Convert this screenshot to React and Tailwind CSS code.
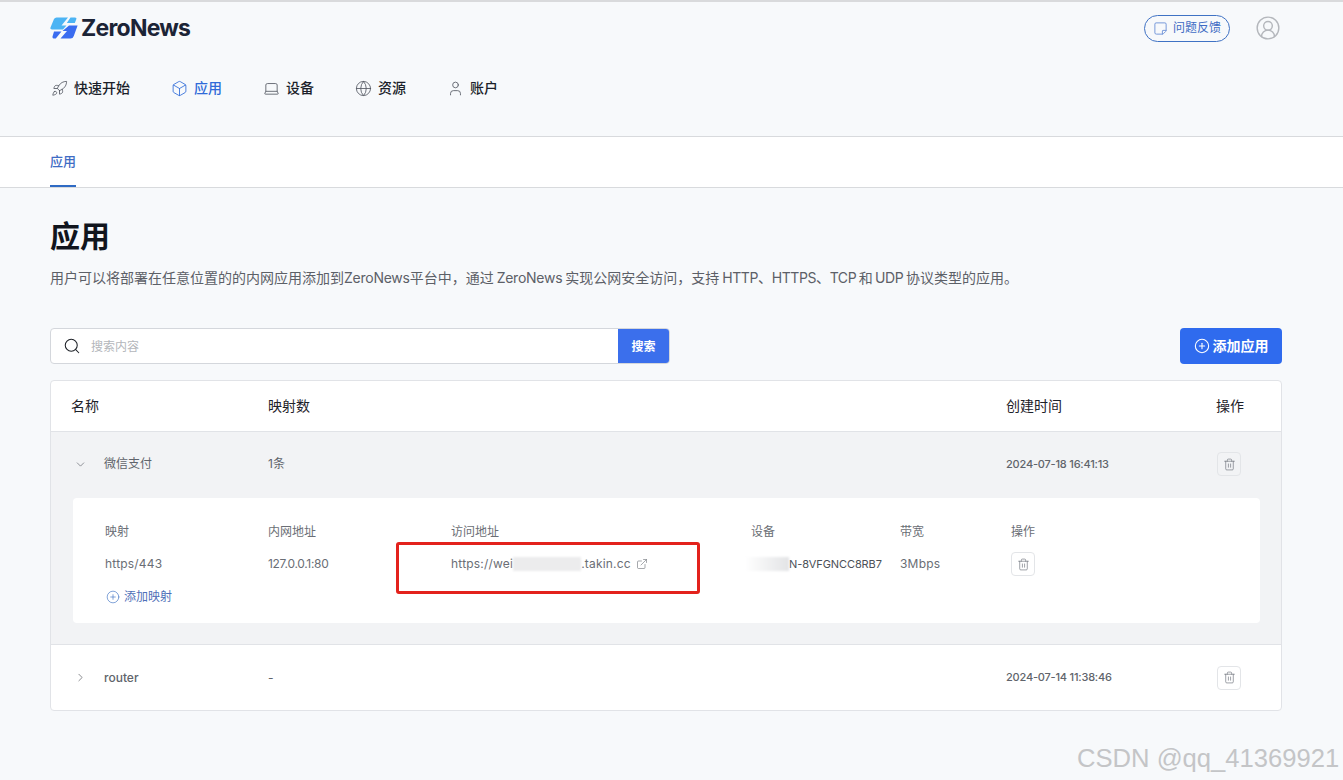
import React from "react";
import { Rocket, Box, Laptop, Globe, User, StickyNote, CircleUserRound, Search, CirclePlus, ChevronDown, ChevronRight, Trash2, ExternalLink } from "lucide-react";

const cjk = "font-['Inter','Noto_Sans_CJK_SC',sans-serif]";

function Logo() {
  return (
    <svg width="28" height="22" viewBox="0 0 28 22" className="shrink-0">
      <path d="M6.5 0.5H18L11.5 8.5H16.5L13 12.5H2Q-0.4 12.5 0.6 10.2L4 2Q4.8 0.5 6.5 0.5Z" fill="#4cb4f4" />
      <path d="M20.5 0.5H25Q27 0.5 26.2 2.4L24.8 6H16.8Z" fill="#4cb4f4" />
      <path d="M19 8.5H27.6L23.8 19Q23 21.5 20.5 21.5H10.5L17 14H12.5Z" fill="#3a6cf0" />
      <path d="M4 14.5H11.5L5.8 21.5H4.5Q2 21.5 2.6 19.2Z" fill="#3a6cf0" />
    </svg>
  );
}

function NavItem({ icon: Icon, label, active }) {
  return (
    <div className={`flex items-center gap-[6px] text-sm font-medium ${active ? "text-[#2f6bd8]" : "text-[#1b1f2a]"}`}>
      <Icon size={17} strokeWidth={1.2} className={active ? "text-[#2f6bd8]" : "text-[#555a63]"} />
      <span>{label}</span>
    </div>
  );
}

function TrashButton({ bg }) {
  return (
    <div className={`flex h-6 w-6 items-center justify-center rounded border border-[#e3e5e8] ${bg}`}>
      <Trash2 size={13} strokeWidth={1.2} className="text-[#6b7078]" />
    </div>
  );
}

export default function App() {
  return (
    <div className={`relative h-[780px] w-full overflow-hidden border-t-2 border-[#d9dadc] bg-[#f7f9fb] ${cjk}`}>
      <header className="h-[135px] border-b border-[#d8dadd] pl-[50px] pr-[62px]">
        <div className="flex h-[52px] items-center justify-between">
          <div className="flex items-center gap-[3px]">
            <Logo />
            <span className="text-[23px] font-bold tracking-[-0.75px] text-[#1c2436]">ZeroNews</span>
          </div>
          <div className="flex items-center gap-[25px]">
            <div className="flex h-[27px] w-[86px] items-center justify-center gap-[5px] rounded-full border border-[#3f72c4] text-xs text-[#3f6cc4]">
              <StickyNote size={15} strokeWidth={1.5} className="rotate-90 text-[#6f93d8]" />
              <span>问题反馈</span>
            </div>
            <CircleUserRound size={26} strokeWidth={1.3} className="text-[#b4b7bc]" />
          </div>
        </div>
        <nav className="mt-[14px] flex h-[40px] items-center pl-[1px]">
          <div className="w-[120px]"><NavItem icon={Rocket} label="快速开始" /></div>
          <div className="w-[92px]"><NavItem icon={Box} label="应用" active /></div>
          <div className="w-[92px]"><NavItem icon={Laptop} label="设备" /></div>
          <div className="w-[92px]"><NavItem icon={Globe} label="资源" /></div>
          <div><NavItem icon={User} label="账户" /></div>
        </nav>
      </header>

      <div className="h-[51px] border-b border-[#d8dadd] bg-white px-[50px]">
        <div className="flex h-full w-[26px] items-center justify-center border-b-2 border-[#2f6bc4] pt-[2px] text-[13px] font-medium text-[#3f6cc4]">
          应用
        </div>
      </div>

      <main className="pl-[50px] pr-[61px]">
        <h1 className="mt-[28px] text-[30px] font-bold leading-[40px] text-[#11151d]">应用</h1>
        <p className="mt-[12px] text-sm leading-5 text-[#5c6067] [word-spacing:-1px]">
          用户可以将部署在任意位置的的内网应用添加到<span className="tracking-[-0.25px]">ZeroNews</span>平台中，通过 <span className="tracking-[-0.25px]">ZeroNews</span> 实现公网安全访问，支持 <span className="tracking-[-0.4px]">HTTP、HTTPS、TCP 和 UDP</span> 协议类型的应用。
        </p>

        <div className="mt-[40px] flex items-center justify-between">
          <div className="flex h-9 w-[620px] overflow-hidden rounded border border-[#d4d7dc] bg-white">
            <div className="flex flex-1 items-center gap-[10px] pl-[12px]">
              <Search size={18} strokeWidth={1.4} className="text-[#1f2329]" />
              <span className="pt-[2px] text-xs text-[#b3b6bb]">搜索内容</span>
            </div>
            <div className="flex w-[51px] items-center justify-center bg-[#3b6fec] pt-[1px] text-xs font-bold text-white">搜索</div>
          </div>
          <div className="flex h-9 w-[102px] items-center justify-center gap-[3px] rounded bg-[#2f6bee] text-sm font-bold text-white">
            <CirclePlus size={16} strokeWidth={1.6} />
            <span>添加应用</span>
          </div>
        </div>

        <div className="mt-4 overflow-hidden rounded border border-[#e1e3e7] bg-white">
          <div className="grid h-[51px] grid-cols-[197px_738px_210px_1fr] items-center border-b border-[#e1e3e7] pl-5 text-sm text-[#1e2229]">
            <span>名称</span>
            <span>映射数</span>
            <span>创建时间</span>
            <span>操作</span>
          </div>

          <div className="h-[213px] border-b border-[#e1e3e7] bg-[#f2f3f5]">
            <div className="grid h-[66px] grid-cols-[194px_738px_211px_1fr] items-center pb-[2px] pl-[23px] text-xs text-[#60646b]">
              <div className="flex items-center gap-[17px]">
                <ChevronDown size={13} strokeWidth={1.1} className="text-[#4c5057]" />
                <span>微信支付</span>
              </div>
              <span>1条</span>
              <span className="text-[11px] font-medium tracking-[-0.2px]">2024-07-18 16:41:13</span>
              <TrashButton bg="bg-[#f2f3f5]" />
            </div>
            <div className="ml-[22px] mr-[21px] h-[125px] rounded bg-white pl-[32px] pt-[25px] text-xs text-[#6a6e75]">
              <div className="grid grid-cols-[163px_183px_300px_149px_111px_1fr] leading-[18px]">
                <span>映射</span>
                <span>内网地址</span>
                <span>访问地址</span>
                <span>设备</span>
                <span>带宽</span>
                <span>操作</span>
              </div>
              <div className="mt-[11px] grid h-6 grid-cols-[163px_183px_300px_149px_111px_1fr] items-center tracking-[0.2px]">
                <span>https/443</span>
                <span className="tracking-[-0.3px]">127.0.0.1:80</span>
                <span className="flex items-center">
                  https://wei
                  <span className="h-[14px] w-[68px] bg-[#ececed] blur-[1px]" />
                  .takin.cc
                  <ExternalLink size={12} strokeWidth={1.2} className="ml-[5px]" />
                </span>
                <span className="ml-[-6px] flex items-center whitespace-nowrap text-[11px] tracking-[-0.1px] text-[#4c5057]">
                  <span className="h-[14px] w-[44px] bg-gradient-to-r from-white to-[#e3e4e6] blur-[1px]" />
                  N-8VFGNCC8RB7
                </span>
                <span>3Mbps</span>
                <TrashButton bg="bg-white" />
              </div>
              <div className="mt-[13px] flex items-center gap-1 pl-[1px] text-[#4f6fb8]">
                <CirclePlus size={14} strokeWidth={1.1} className="text-[#3f72c4]" />
                <span>添加映射</span>
              </div>
            </div>
          </div>

          <div className="grid h-[65px] grid-cols-[194px_738px_211px_1fr] items-center pl-[23px] text-xs text-[#60646b]">
            <div className="flex items-center gap-[17px]">
              <ChevronRight size={13} strokeWidth={1.1} className="text-[#3c4047]" />
              <span className="font-medium">router</span>
            </div>
            <span>-</span>
            <span className="text-[11px] font-medium tracking-[-0.2px]">2024-07-14 11:38:46</span>
            <TrashButton bg="bg-white" />
          </div>
        </div>
      </main>

      {/* screenshot annotations lying over the page */}
      <div className="absolute left-[396px] top-[540px] h-[52px] w-[304px] rounded-[3px] border-[3px] border-[#e3221c]" />
      <div className="absolute left-[1077px] top-[741px] font-['Liberation_Sans',sans-serif] text-[25.6px] leading-[30px] text-[#c4c5c7]">
        CSDN @qq_41369921
      </div>
    </div>
  );
}
